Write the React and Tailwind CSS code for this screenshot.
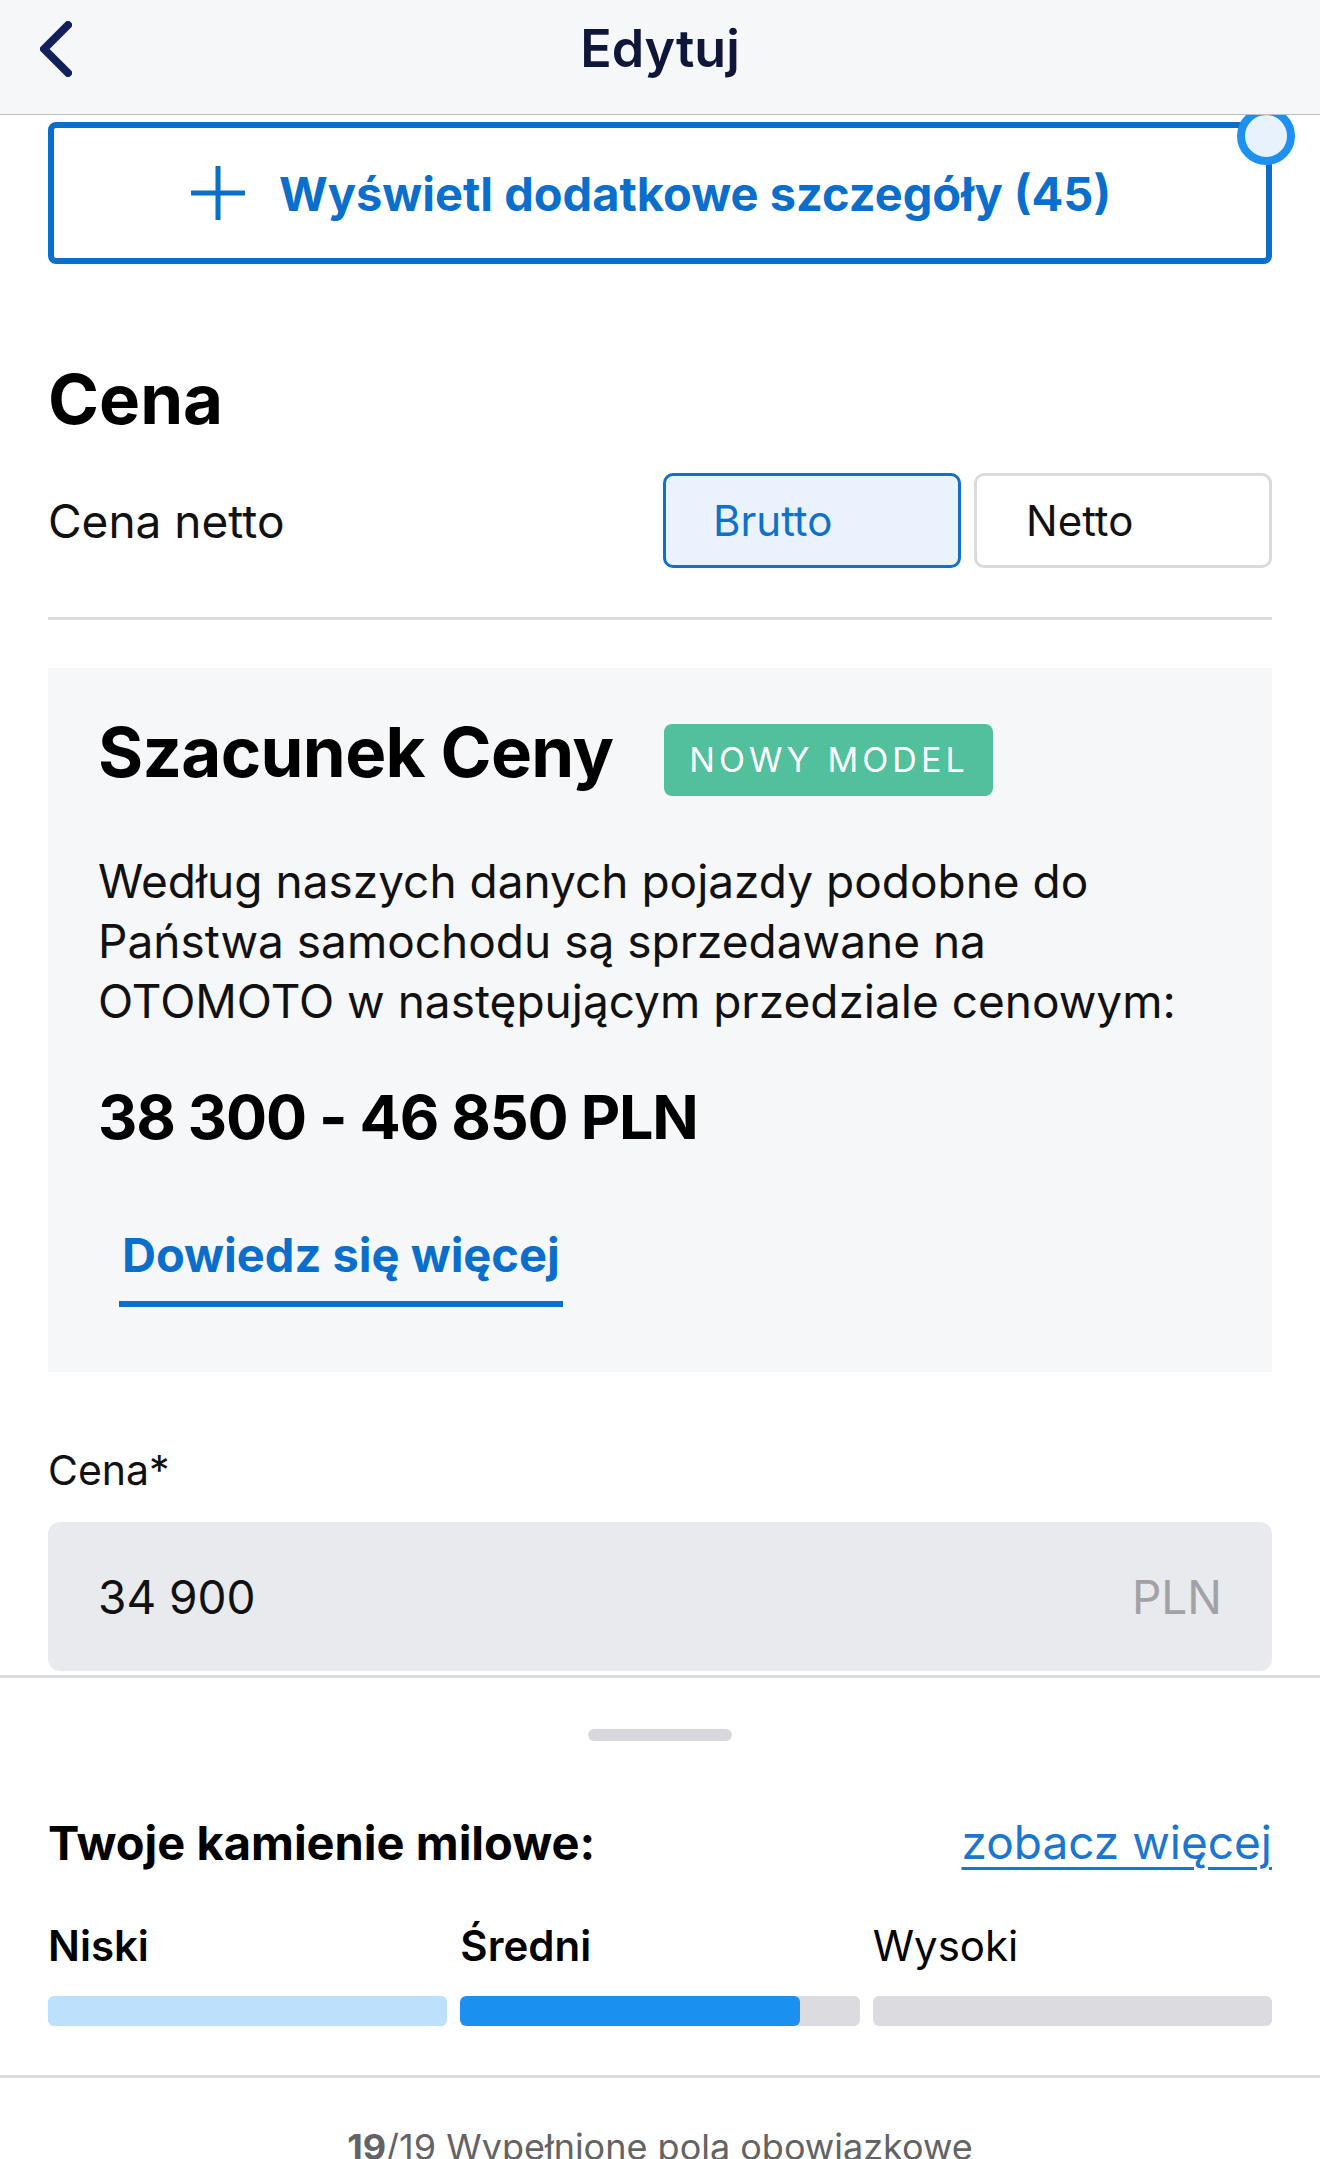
import React from 'react';

const Milestone = ({ label, bold, fill, color, track }) => (
  <div className="flex flex-col">
    <span className={`text-[42px] leading-none ${bold ? 'font-semibold' : 'font-normal'}`}>{label}</span>
    <div className={`mt-[29px] h-[30px] rounded-[6px] overflow-hidden ${track}`}>
      <div className={`h-full rounded-[6px] ${color}`} style={{ width: `${fill}%` }} />
    </div>
  </div>
);

const App = () => {
  return (
    <div className="relative w-[1320px] h-[2159px] overflow-hidden bg-white font-['Inter',sans-serif] text-black">
      <header className="relative z-10 h-[115px] bg-[#f6f7f9] border-b border-[#bcbcc0] pt-[21px]">
        <div className="grid grid-cols-[1fr_auto_1fr] items-center h-[56px]">
          <svg className="ml-[40px]" width="32" height="56" viewBox="0 0 32 56" fill="none">
            <polyline
              points="28,4 4,28 28,52"
              stroke="#13205a"
              strokeWidth="8"
              strokeLinecap="round"
              strokeLinejoin="round"
            />
          </svg>
          <h1 className="text-[52px] leading-none font-semibold text-[#10163a]">Edytuj</h1>
          <div />
        </div>
      </header>

      <main className="relative px-[48px]">
        <div className="absolute left-[1237px] top-[-15px] w-[58px] h-[58px] rounded-full border-[8px] border-[#1e90f0] bg-[#e8f2fc]" />

        <button className="mt-[7px] h-[142px] w-full border-[6px] border-[#0a6fcc] rounded-[8px] flex items-center justify-center gap-[34px] pr-[18px] text-[47px] font-bold text-[#0a6fcc]">
          <svg width="54" height="54" viewBox="0 0 54 54">
            <path d="M27 1v52M1 27h52" stroke="#0a6fcc" strokeWidth="5" strokeLinecap="round" />
          </svg>
          <span className="leading-none">Wyświetl dodatkowe szczegóły (45)</span>
        </button>

        <h2 className="mt-[101px] text-[69px] leading-none font-bold">Cena</h2>

        <div className="mt-[39px] flex items-center justify-between">
          <span className="text-[46px] leading-none text-[#111]">Cena netto</span>
          <div className="flex gap-[13px]">
            <button className="w-[298px] h-[95px] flex items-center pl-[47px] border-[3px] border-[#1170c8] rounded-[10px] bg-[#eaf3fd] text-[42px] leading-none text-[#1170c8]">
              Brutto
            </button>
            <button className="w-[298px] h-[95px] flex items-center pl-[49px] border-[3px] border-[#dadadf] rounded-[10px] bg-white text-[42px] leading-none text-[#111]">
              Netto
            </button>
          </div>
        </div>

        <div className="mt-[49px] h-[3px] bg-[#dcdce0]" />

        <section className="mt-[48px] bg-[#f6f7f9] pl-[50px] pr-[40px] pt-[50px] pb-[65px]">
          <div className="flex items-start">
            <h3 className="text-[69px] leading-none font-bold tracking-[-0.01em]">Szacunek Ceny</h3>
            <span className="ml-[51px] mt-[6px] h-[72px] pl-[25px] pr-[24px] flex items-center rounded-[8px] bg-[#52bf9d] text-white text-[34px] leading-none tracking-[0.12em]">
              NOWY MODEL
            </span>
          </div>

          <p className="mt-[55px] text-[46px] leading-[60px] text-[#111] whitespace-nowrap">
            Według naszych danych pojazdy podobne do
            <br />
            Państwa samochodu są sprzedawane na
            <br />
            OTOMOTO w następującym przedziale cenowym:
          </p>

          <div className="mt-[56px] text-[61px] leading-none font-bold tracking-[-0.02em]">38 300 - 46 850 PLN</div>

          <div className="mt-[83px] flex">
            <a className="ml-[21px] px-[3px] pb-[23px] border-b-[6px] border-[#0a6fcc] text-[47px] leading-none font-bold text-[#0a6fcc]">
              Dowiedz się więcej
            </a>
          </div>
        </section>

        <label className="block mt-[78px] text-[41px] leading-none text-[#111]">Cena*</label>
        <div className="mt-[31px] h-[149px] rounded-[12px] bg-[#e9eaee] flex items-center justify-between px-[50px] text-[46px] leading-none">
          <span className="text-[#111]">34 900</span>
          <span className="text-[#a1a1a6]">PLN</span>
        </div>
      </main>

      <div className="mt-[4px] border-t-[3px] border-[#dcdce0] bg-white">
        <div className="mx-auto mt-[51px] w-[144px] h-[12px] rounded-full bg-[#d8d8dc]" />

        <div className="px-[48px]">
          <div className="mt-[78px] flex items-start justify-between">
            <span className="text-[47px] leading-none font-bold">Twoje kamienie milowe:</span>
            <a className="text-[46px] leading-none text-[#1b76d1] underline decoration-[3px] underline-offset-[8px]">
              zobacz więcej
            </a>
          </div>

          <div className="mt-[59px] grid grid-cols-3 gap-x-[13px]">
            <Milestone label="Niski" bold fill={100} color="bg-[#bde0fc]" track="bg-[#bde0fc]" />
            <Milestone label="Średni" bold fill={85} color="bg-[#1a90f0]" track="bg-[#dcdce0]" />
            <Milestone label="Wysoki" fill={0} color="bg-[#1a90f0]" track="bg-[#dcdce0]" />
          </div>
        </div>

        <div className="mt-[49px] h-[3px] bg-[#dcdce0]" />

        <div className="mt-[51px] text-center text-[36px] leading-none text-[#636366]">
          <span className="font-bold">19</span>/19 Wypełnione pola obowiązkowe
        </div>
      </div>
    </div>
  );
};

export default App;
